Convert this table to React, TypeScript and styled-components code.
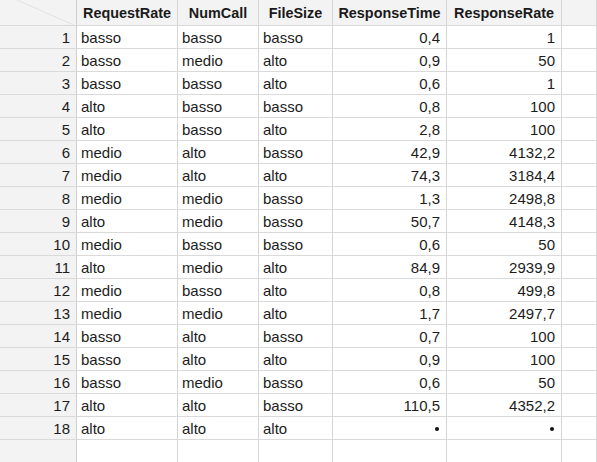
import React from "react";
import styled, { createGlobalStyle } from "styled-components";

const Global = createGlobalStyle`
  html, body { margin: 0; padding: 0; background: #ffffff; }
  body { font-family: "Liberation Sans", Arial, sans-serif; overflow: hidden; }
`;

const Sheet = styled.div`
  display: grid;
  grid-template-columns: 77px 101px 81px 74px 114px 115px 1fr;
  grid-auto-rows: 23px;
  grid-template-rows: 26px;
  width: 597px;
  height: 462px;
  overflow: hidden;
  color: #1c1c1c;
`;

const BaseCell = styled.div`
  box-sizing: border-box;
  border-right: 1px solid #d6d6d6;
  border-bottom: 1px solid #dadada;
  display: flex;
  align-items: center;
  white-space: nowrap;
  overflow: hidden;
`;

const Corner = styled(BaseCell)`
  position: relative;
  background: #f3f3f3;
  border-right-color: #cfcfcf;
`;

const CornerLine = styled.svg`
  position: absolute;
  left: 0;
  top: 0;
`;

const HeaderCell = styled(BaseCell)`
  background: #f3f3f3;
  justify-content: center;
  font-weight: bold;
  font-size: 14.4px;
  color: #1a1a1a;
  padding-top: 1px;
`;

const RowNum = styled(BaseCell)`
  background: #f3f3f3;
  justify-content: flex-end;
  padding-right: 6px;
  font-size: 15px;
  border-right-color: #cfcfcf;
`;

const Cell = styled(BaseCell)<{ $num?: boolean }>`
  background: #ffffff;
  font-size: 15px;
  justify-content: ${(p) => (p.$num ? "flex-end" : "flex-start")};
  padding: ${(p) => (p.$num ? "0 6px 0 0" : "0 0 0 4px")};
`;

const Dot = styled.span`
  display: inline-block;
  width: 4px;
  height: 4px;
  border-radius: 50%;
  background: #111;
  margin-right: 1px;
  margin-top: 2px;
`;

const headers = ["RequestRate", "NumCall", "FileSize", "ResponseTime", "ResponseRate"];

type Row = [string, string, string, string | null, string | null];

const rows: Row[] = [
  ["basso", "basso", "basso", "0,4", "1"],
  ["basso", "medio", "alto", "0,9", "50"],
  ["basso", "basso", "alto", "0,6", "1"],
  ["alto", "basso", "basso", "0,8", "100"],
  ["alto", "basso", "alto", "2,8", "100"],
  ["medio", "alto", "basso", "42,9", "4132,2"],
  ["medio", "alto", "alto", "74,3", "3184,4"],
  ["medio", "medio", "basso", "1,3", "2498,8"],
  ["alto", "medio", "basso", "50,7", "4148,3"],
  ["medio", "basso", "basso", "0,6", "50"],
  ["alto", "medio", "alto", "84,9", "2939,9"],
  ["medio", "basso", "alto", "0,8", "499,8"],
  ["medio", "medio", "alto", "1,7", "2497,7"],
  ["basso", "alto", "basso", "0,7", "100"],
  ["basso", "alto", "alto", "0,9", "100"],
  ["basso", "medio", "basso", "0,6", "50"],
  ["alto", "alto", "basso", "110,5", "4352,2"],
  ["alto", "alto", "alto", null, null],
];

const NumValue = ({ v }: { v: string | null }) => (v === null ? <Dot /> : <>{v}</>);

export default function App() {
  return (
    <>
      <Global />
      <Sheet>
        <Corner>
          <CornerLine width="77" height="26" viewBox="0 0 77 26">
            <line x1="17" y1="0" x2="74" y2="25" stroke="#e2e2e2" strokeWidth="1" />
          </CornerLine>
        </Corner>
        {headers.map((h) => (
          <HeaderCell key={h}>{h}</HeaderCell>
        ))}
        <HeaderCell />
        {rows.map((r, i) => (
          <React.Fragment key={i}>
            <RowNum>{i + 1}</RowNum>
            <Cell>{r[0]}</Cell>
            <Cell>{r[1]}</Cell>
            <Cell>{r[2]}</Cell>
            <Cell $num>
              <NumValue v={r[3]} />
            </Cell>
            <Cell $num>
              <NumValue v={r[4]} />
            </Cell>
            <Cell />
          </React.Fragment>
        ))}
        <RowNum />
        <Cell />
        <Cell />
        <Cell />
        <Cell />
        <Cell />
        <Cell />
      </Sheet>
    </>
  );
}
